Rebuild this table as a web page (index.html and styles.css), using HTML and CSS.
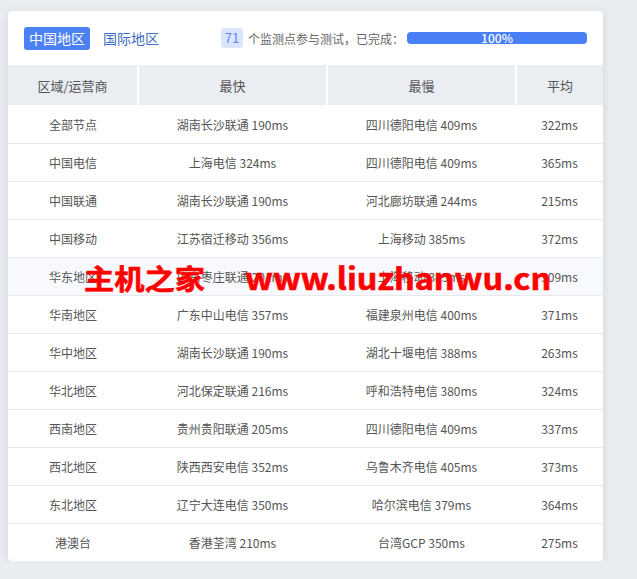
FILE: index.html
```html
<!DOCTYPE html>
<html lang="zh-CN">
<head>
<meta charset="utf-8">
<title>监测</title>
<link rel="stylesheet" href="styles.css">
</head>
<body>
<div class="card">
  <div class="top">
    <div class="tabs">
      <span class="tab active">中国地区</span>
      <span class="tab">国际地区</span>
    </div>
    <div class="status">
      <span class="badge">71</span>
      <span class="status-text">个监测点参与测试，已完成：</span>
      <div class="progress"><span>100%</span></div>
    </div>
  </div>
  <table class="grid">
    <colgroup><col class="c1"><col class="c2"><col class="c3"><col class="c4"></colgroup>
    <thead>
      <tr><th>区域/运营商</th><th>最快</th><th>最慢</th><th>平均</th></tr>
    </thead>
    <tbody>
      <tr><td>全部节点</td><td>湖南长沙联通 190ms</td><td>四川德阳电信 409ms</td><td>322ms</td></tr>
      <tr><td>中国电信</td><td>上海电信 324ms</td><td>四川德阳电信 409ms</td><td>365ms</td></tr>
      <tr><td>中国联通</td><td>湖南长沙联通 190ms</td><td>河北廊坊联通 244ms</td><td>215ms</td></tr>
      <tr><td>中国移动</td><td>江苏宿迁移动 356ms</td><td>上海移动 385ms</td><td>372ms</td></tr>
      <tr class="hover"><td>华东地区</td><td>山东枣庄联通 201ms</td><td>上海移动 385ms</td><td>309ms</td></tr>
      <tr><td>华南地区</td><td>广东中山电信 357ms</td><td>福建泉州电信 400ms</td><td>371ms</td></tr>
      <tr><td>华中地区</td><td>湖南长沙联通 190ms</td><td>湖北十堰电信 388ms</td><td>263ms</td></tr>
      <tr><td>华北地区</td><td>河北保定联通 216ms</td><td>呼和浩特电信 380ms</td><td>324ms</td></tr>
      <tr><td>西南地区</td><td>贵州贵阳联通 205ms</td><td>四川德阳电信 409ms</td><td>337ms</td></tr>
      <tr><td>西北地区</td><td>陕西西安电信 352ms</td><td>乌鲁木齐电信 405ms</td><td>373ms</td></tr>
      <tr><td>东北地区</td><td>辽宁大连电信 350ms</td><td>哈尔滨电信 379ms</td><td>364ms</td></tr>
      <tr><td>港澳台</td><td>香港荃湾 210ms</td><td>台湾GCP 350ms</td><td>275ms</td></tr>
    </tbody>
  </table>
  <div class="watermark"><span class="wm-cn">主机之家</span><span class="wm-en">www.liuzhanwu.cn</span></div>
</div>
</body>
</html>
```
FILE: styles.css
```css
html, body {
  margin: 0;
  padding: 0;
  background: #e9ecf1;
}
body {
  padding: 11px 0 0 8px;
  font-family: "Noto Sans CJK SC", "Noto Sans", sans-serif;
  color: #606266;
}
.card {
  position: relative;
  width: 595px;
  background: #fff;
  border-radius: 4px;
  box-shadow: 0 2px 10px rgba(0, 0, 0, 0.10);
  overflow: hidden;
}
.top {
  height: 54px;
  display: flex;
  align-items: center;
  padding: 0 16px;
  box-sizing: border-box;
  white-space: nowrap;
}
.tabs {
  display: flex;
  align-items: center;
  gap: 8px;
  flex-shrink: 0;
}
.tab {
  flex-shrink: 0;
  font-size: 14px;
  line-height: 23px;
  height: 23px;
  padding: 0 5px;
  color: #3f6cc4;
  border-radius: 3px;
}
.tab.active {
  background: #4b81f5;
  color: #fff;
}
.status {
  display: flex;
  align-items: center;
  margin-left: 57px;
  flex-shrink: 0;
}
.badge {
  flex-shrink: 0;
  width: 22px;
  height: 20px;
  line-height: 20px;
  text-align: center;
  font-size: 13px;
  color: #5a8cf5;
  background: #dbe6fe;
  border-radius: 3px;
  margin-right: 5px;
}
.status-text {
  flex-shrink: 0;
  font-size: 12px;
  color: #666;
}
.progress {
  flex-shrink: 0;
  width: 180px;
  height: 12px;
  margin-left: 3px;
  background: #4a80f7;
  border-radius: 4px;
  color: #fff;
  font-size: 12px;
  line-height: 12px;
  text-align: center;
  font-weight: 500;
}
.grid {
  width: 595px;
  border-collapse: collapse;
  table-layout: fixed;
}
.c1 { width: 130px; }
.c2 { width: 189px; }
.c3 { width: 189px; }
.c4 { width: 87px; }
.grid th {
  height: 40px;
  padding: 0;
  background: #eaedf2;
  font-weight: normal;
  font-size: 13px;
  color: #555;
  border-left: 2px solid #fff;
  border-bottom: 1px solid #fff;
}
.grid th:first-child { border-left: none; }
.grid td {
  height: 37px;
  padding: 0;
  text-align: center;
  font-size: 12px;
  color: #555;
  border-bottom: 1px solid #e6e9ee;
}
.grid tbody tr:last-child td { border-bottom: none; }
.grid tr.hover td { background: #f8f9fc; }
.watermark {
  position: absolute;
  left: 76px;
  top: 246px;
  color: #ff0000;
  font-weight: 700;
  line-height: 40px;
  white-space: nowrap;
  transform: scaleX(1.08);
  transform-origin: left top;
  display: flex;
  align-items: baseline;
  gap: 37px;
}
.wm-cn {
  font-size: 28px;
  -webkit-text-stroke: 0.6px #ff0000;
}
.wm-en {
  font-size: 30px;
  -webkit-text-stroke: 0.6px #ff0000;
}
```
